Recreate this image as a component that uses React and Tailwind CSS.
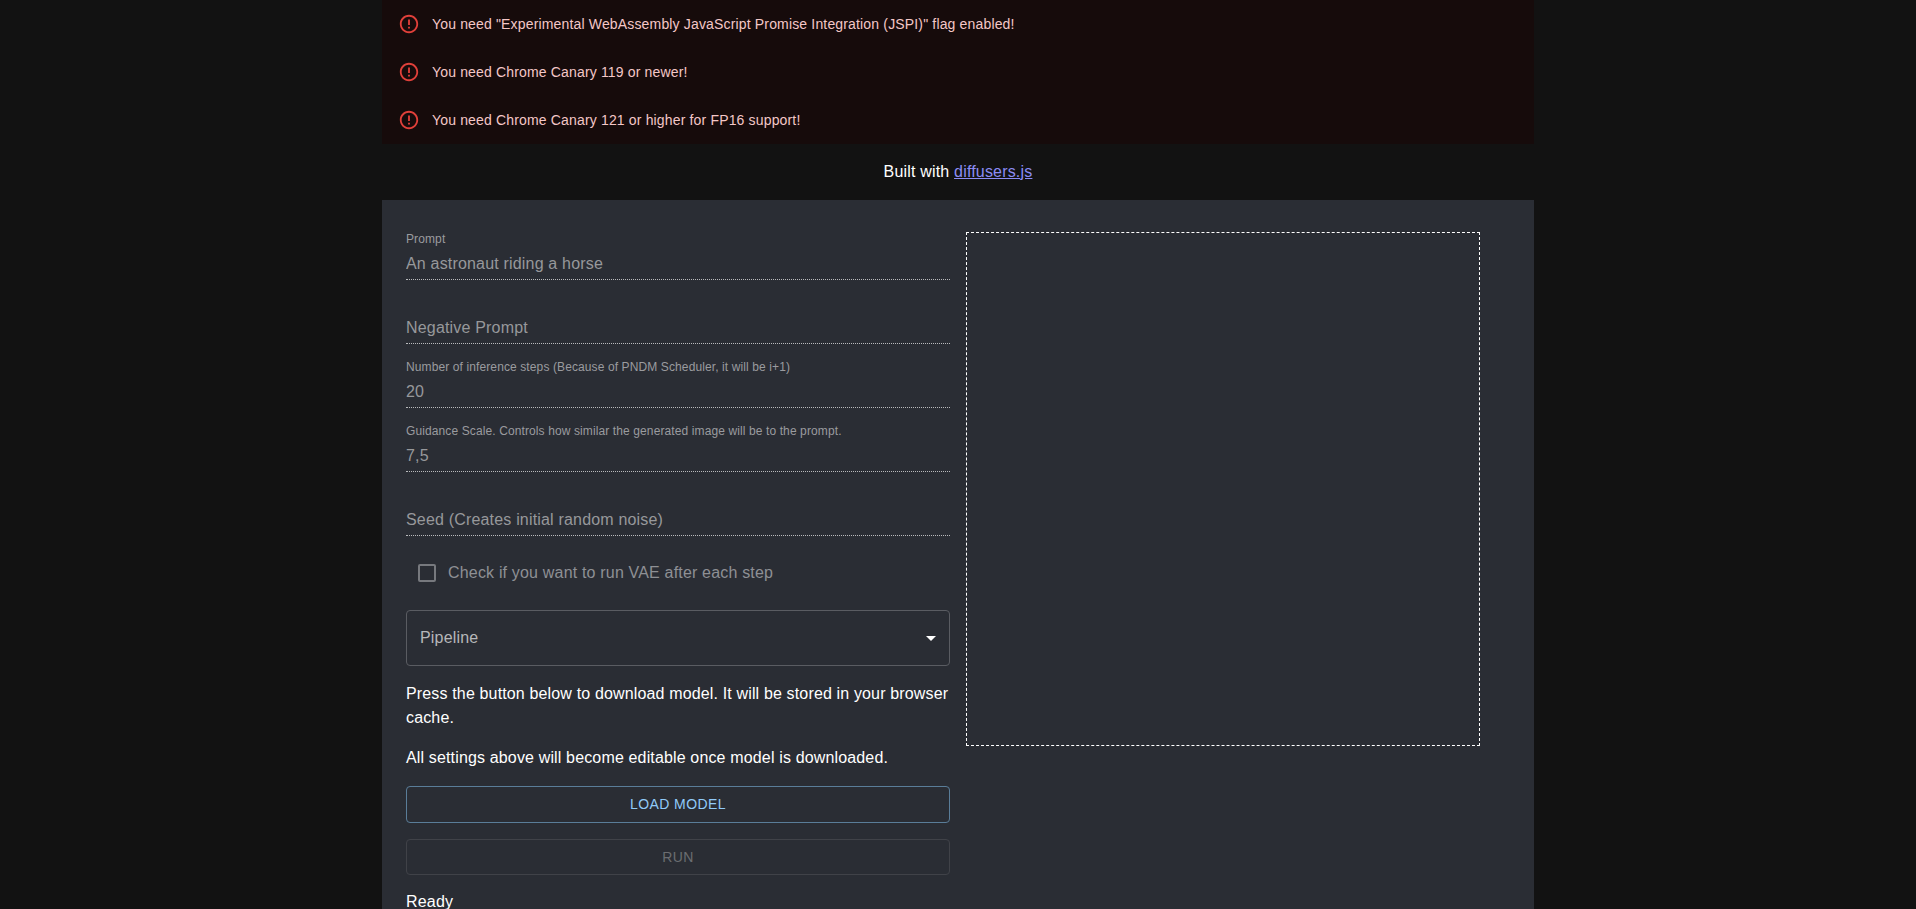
import { useState } from 'react'

const warnings = [
  'You need "Experimental WebAssembly JavaScript Promise Integration (JSPI)" flag enabled!',
  'You need Chrome Canary 119 or newer!',
  'You need Chrome Canary 121 or higher for FP16 support!',
]

function ErrorIcon() {
  return (
    <svg viewBox="0 0 24 24" className="w-[22px] h-[22px] shrink-0 fill-[#e0403a]">
      <path d="M11 15h2v2h-2zm0-8h2v6h-2zm.99-5C6.47 2 2 6.48 2 12s4.47 10 9.99 10C17.52 22 22 17.52 22 12S17.52 2 11.99 2zM12 20c-4.42 0-8-3.58-8-8s3.58-8 8-8 8 3.58 8 8-3.58 8-8 8z" />
    </svg>
  )
}

function Field({ label, value, placeholder }) {
  return (
    <div className="h-12 flex flex-col justify-end relative">
      {label && <label className="absolute top-0 left-0 text-xs leading-[14px] tracking-[0.11px] text-[#9a9b9f]">{label}</label>}
      <input
        disabled
        defaultValue={value}
        placeholder={placeholder}
        className="w-full h-8 pt-[5px] pb-1 text-base leading-[23px] tracking-[0.18px] text-[#97989b] placeholder:text-[#97989b] placeholder:opacity-100 bg-transparent outline-none border-b border-dotted border-[#b9babc]"
      />
    </div>
  )
}

export default function App() {
  const [runVae] = useState(false)

  return (
    <div className="h-[909px] overflow-hidden bg-[#121212] text-white tracking-[0.18px] font-['Liberation_Sans',Arial,sans-serif]">
      <div className="w-[1152px] mx-auto">
        {warnings.map((text) => (
          <div key={text} className="h-12 bg-[#160b0b] px-4 flex items-center gap-3 text-sm tracking-[0.16px] text-[#f4c7c7]">
            <ErrorIcon />
            <span>{text}</span>
          </div>
        ))}

        <p className="h-14 flex items-center justify-center">
          <span>
            Built with{' '}
            <a href="#" className="text-[#8c8cf5] underline">diffusers.js</a>
          </span>
        </p>

        {/* Main panel */}
        <div className="bg-[#2a2d34] px-6 pt-8 grid grid-cols-[544px_514px] gap-4 items-start h-[800px]">
          <div className="flex flex-col">
            <div className="flex flex-col gap-4">
              <Field label="Prompt" value="An astronaut riding a horse" />
              <Field placeholder="Negative Prompt" />
              <Field label="Number of inference steps (Because of PNDM Scheduler, it will be i+1)" value="20" />
              <Field label="Guidance Scale. Controls how similar the generated image will be to the prompt." value="7,5" />
              <Field placeholder="Seed (Creates initial random noise)" />
            </div>

            <label className="h-[42px] mt-4 flex items-center pl-3 gap-3 text-[#8e9094]">
              <span className="w-[18px] h-[18px] rounded-[2px] border-2 border-[#77797e]" aria-checked={runVae} />
              <span>Check if you want to run VAE after each step</span>
            </label>

            <div className="h-14 mt-4 rounded border border-[#5a5c62] flex items-center justify-between pl-[13px] pr-[6px] text-[#b6b7b9]">
              <span>Pipeline</span>
              <svg viewBox="0 0 24 24" className="w-6 h-6 fill-white">
                <path d="M7 10l5 5 5-5z" />
              </svg>
            </div>

            <p className="mt-4 leading-6 tracking-[0.15px]">Press the button below to download model. It will be stored in your browser cache.</p>
            <p className="mt-4 leading-6 tracking-[0.15px]">All settings above will become editable once model is downloaded.</p>

            <button className="mt-4 h-[36.5px] rounded border border-[#5a7d99] text-sm tracking-[0.4px] text-[#90caf9]">
              LOAD MODEL
            </button>
            <button disabled className="mt-4 h-[36.5px] rounded border border-[#404248] text-sm tracking-[0.4px] text-[#6b6d71]">
              RUN
            </button>

            <p className="mt-[15px] leading-6">Ready</p>
          </div>

          <div className="w-[514px] h-[514px] border border-dashed border-white" />
        </div>
      </div>
    </div>
  )
}
